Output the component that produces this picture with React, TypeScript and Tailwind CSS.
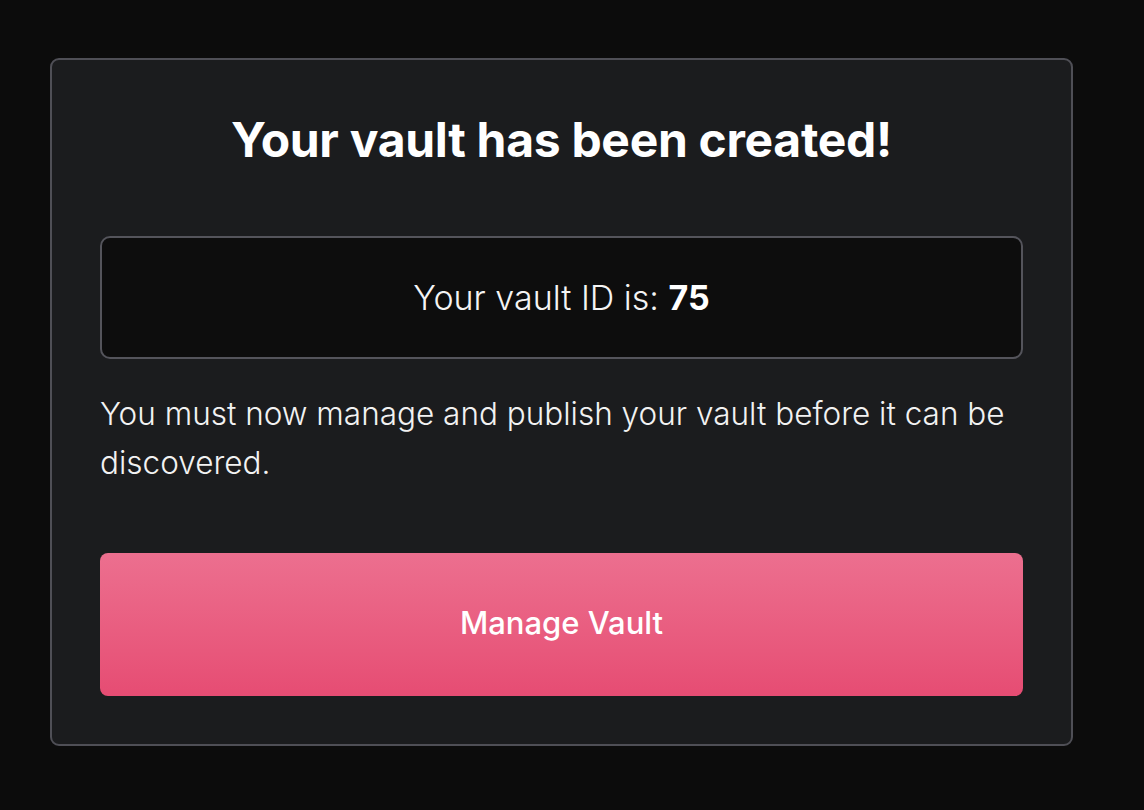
export default function App() {
  return (
    <div
      className="min-h-[810px] w-full bg-[#0c0c0c] pt-[58px] pl-[50px]"
      style={{ fontFamily: "Inter, 'Noto Sans', sans-serif" }}
    >
      <div className="w-[1023px] h-[688px] rounded-[9px] border-2 border-[#4f4f56] bg-[#1b1c1e] px-[48px] pt-[51px] pb-[48px] flex flex-col">
        <h1 className="text-center text-[48px] leading-[58px] font-bold text-white tracking-[-0.3px]">
          Your vault has been created!
        </h1>
        <div className="mt-[67px] h-[123px] rounded-[10px] border-2 border-[#54545b] bg-[#0d0d0d] flex items-center justify-center text-[34px] font-light text-[#f4f4f4]">
          <span>
            Your vault ID is: <b className="font-bold text-white">75</b>
          </span>
        </div>
        <p className="mt-[30px] text-[31.5px] leading-[49px] font-light text-[#f2f2f2]">
          You must now manage and publish your vault before it can be discovered.
        </p>
        <button className="mt-auto h-[143px] w-full rounded-[8px] bg-gradient-to-b from-[#ec6f8f] to-[#e64c73] text-[31px] font-medium text-white pb-[3px]">
          Manage Vault
        </button>
      </div>
    </div>
  );
}
